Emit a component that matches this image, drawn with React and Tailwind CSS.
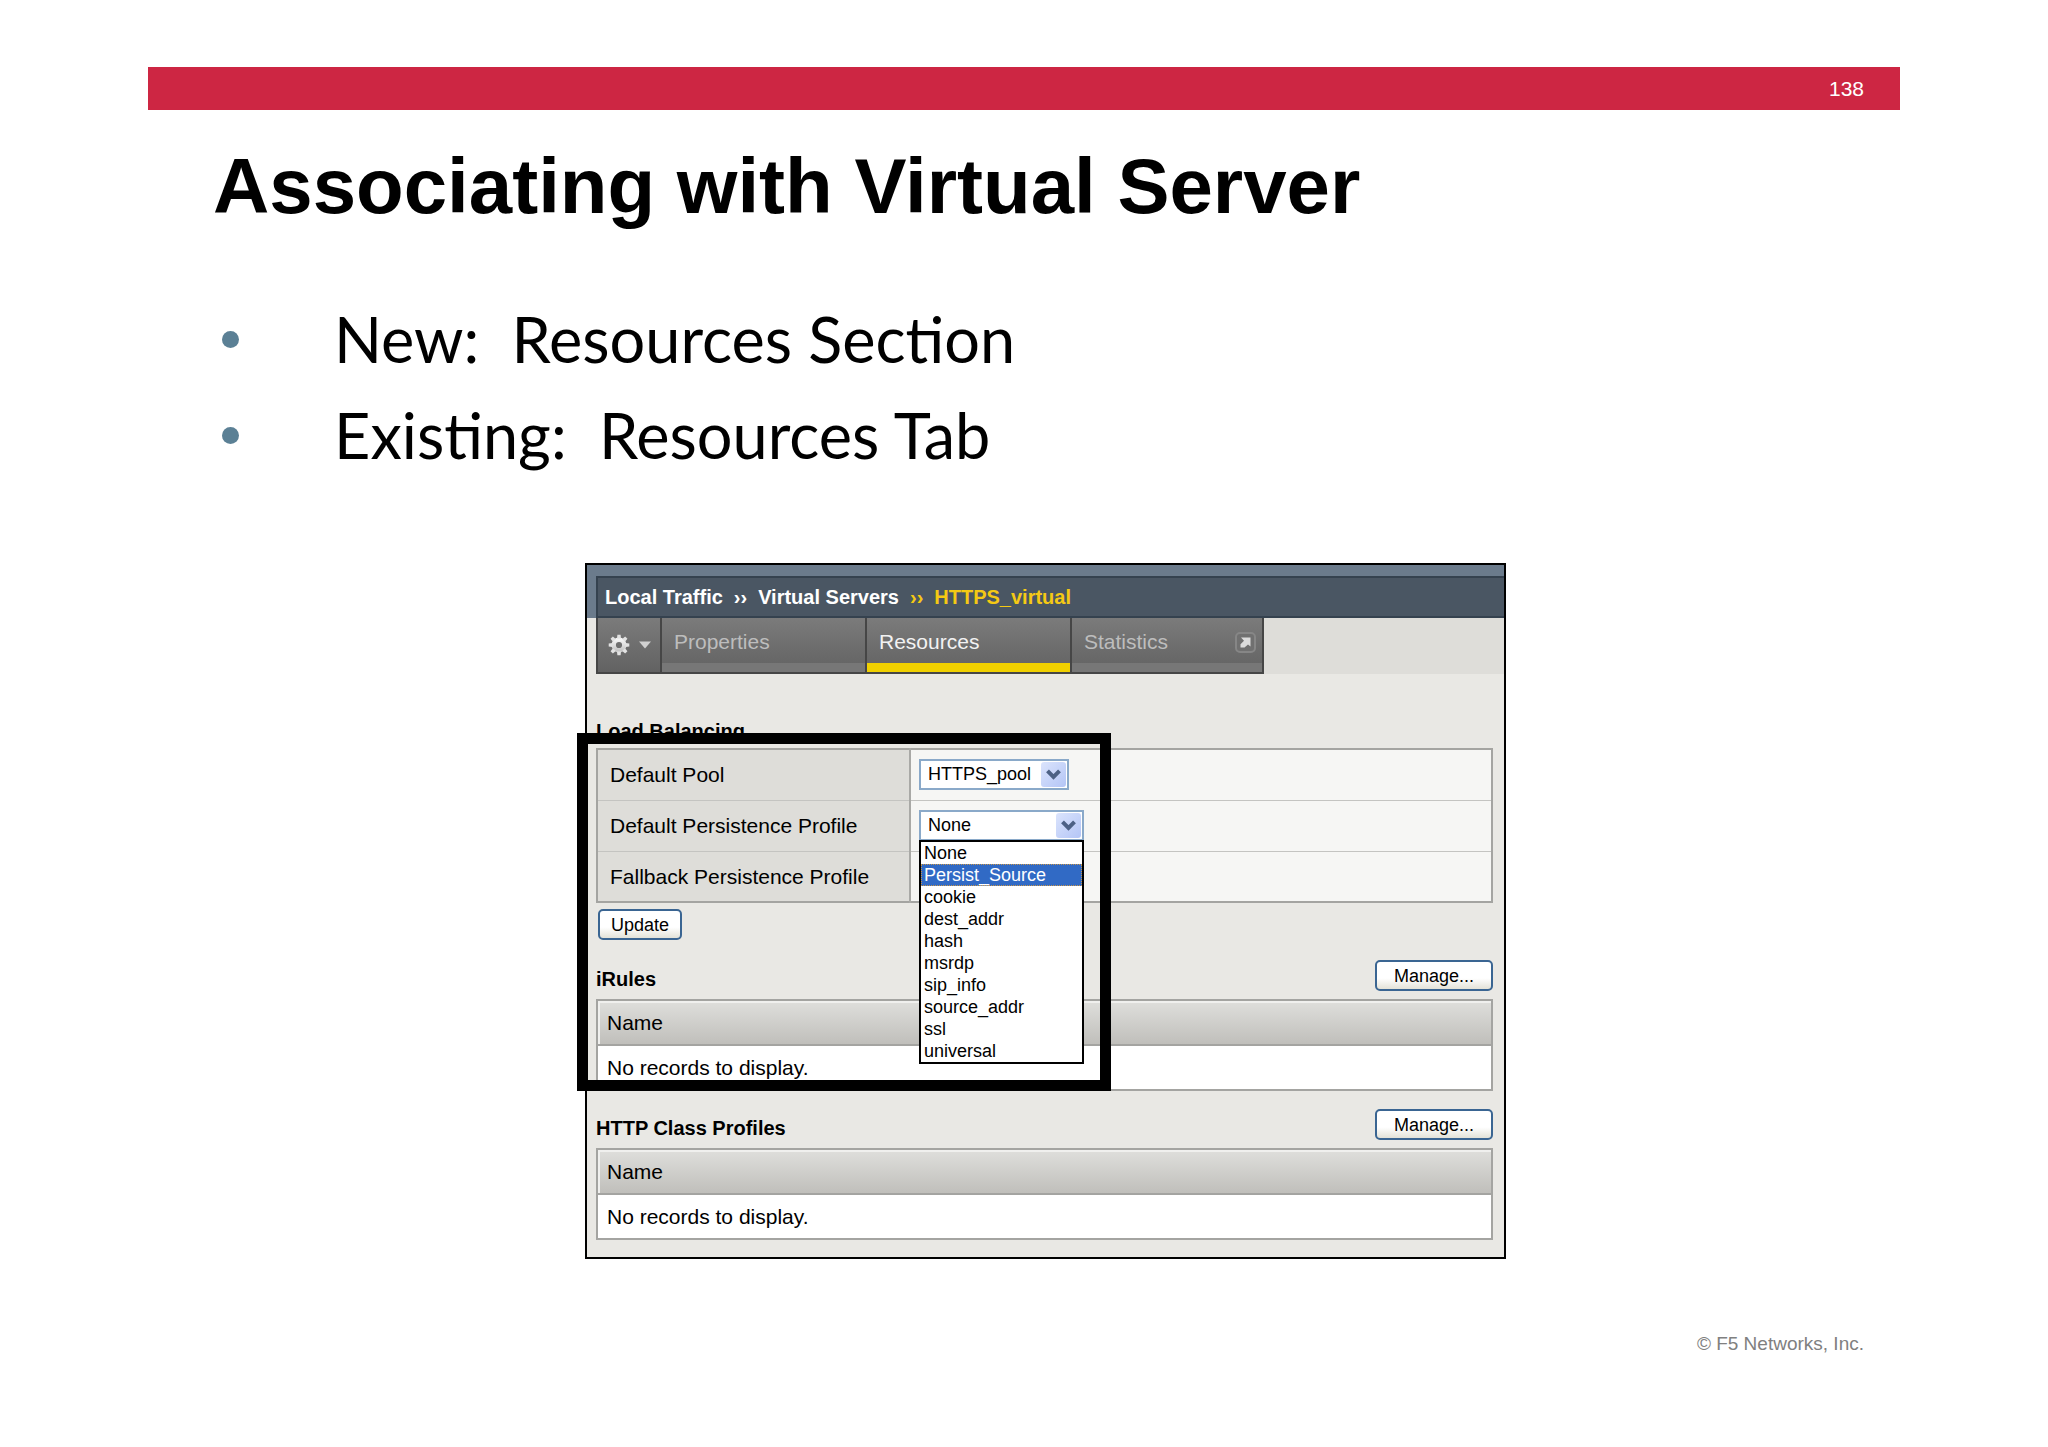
import React from "react";

const persistenceProfiles = [
  "None",
  "Persist_Source",
  "cookie",
  "dest_addr",
  "hash",
  "msrdp",
  "sip_info",
  "source_addr",
  "ssl",
  "universal",
];

function GearIcon() {
  return (
    <svg width="22" height="22" viewBox="-11 -11 22 22">
      <defs>
        <linearGradient id="gear" x1="0" y1="0" x2="0" y2="1">
          <stop offset="0" stopColor="#f4f4f4" />
          <stop offset="1" stopColor="#c6c6c6" />
        </linearGradient>
      </defs>
      <circle r="5.3" fill="none" stroke="url(#gear)" strokeWidth="4.4" />
      {[0, 45, 90, 135, 180, 225, 270, 315].map((angle) => (
        <path key={angle} d="M-2 -6.5L-1.6 -10.3H1.6L2 -6.5Z" fill="#e2e2e2" transform={`rotate(${angle})`} />
      ))}
    </svg>
  );
}

function PopoutIcon() {
  return (
    <svg width="21" height="21" viewBox="0 0 21 21">
      <rect x="1" y="1" width="19" height="19" rx="4" fill="#707070" stroke="#868686" strokeWidth="2" />
      <path d="M6 5.5H15.5V14.5L13 12.4L9.5 15.5H5.5V12.3L9 8.7Z" fill="#dcdcdc" />
    </svg>
  );
}

function Chevron() {
  return (
    <span className="pointer-events-none absolute right-[3px] top-[3px] flex h-[25px] w-[25px] items-center justify-center rounded-[3px] bg-linear-to-br from-[#dbe4fc] to-[#b4c5f6]">
      <svg width="15" height="11" viewBox="0 0 15 11">
        <path d="M1.5 1.8L7.5 7.8L13.5 1.8" fill="none" stroke="#4d6185" strokeWidth="4" />
      </svg>
    </span>
  );
}

function SelectBox({ id, value, className, children }) {
  return (
    <div className={`relative ${className}`}>
      <select
        id={id}
        defaultValue={value}
        className="block h-[31px] w-full appearance-none border-2 border-[#8aa9c9] bg-white pl-[7px] text-lg leading-[27px] text-black outline-none"
      >
        <option>{value}</option>
      </select>
      <Chevron />
      {children}
    </div>
  );
}

function XpButton({ children, className }) {
  return (
    <button
      type="button"
      className={`h-[31px] rounded-[5px] border-2 border-[#3a6592] bg-linear-to-b from-white from-60% to-[#e3e2d8] text-lg leading-[26px] text-black ${className}`}
    >
      {children}
    </button>
  );
}

function SettingRow({ id, label, children }) {
  return (
    <tr className="h-[51px] border-b border-[#c4c4c1] last:border-b-0">
      <th className="w-[313px] border-r-2 border-[#a9a9a6] bg-[#deddd9] pl-3 text-left font-normal">
        <label htmlFor={id}>{label}</label>
      </th>
      <td className="bg-[#f6f6f4] pl-2">{children}</td>
    </tr>
  );
}

function RecordsSection({ title }) {
  return (
    <section>
      <div className="flex items-end justify-between">
        <h2 className="text-xl leading-6 font-bold">{title}</h2>
        <XpButton className="w-[118px]">Manage...</XpButton>
      </div>
      <table className="mt-2 w-full border-collapse border-2 border-[#a4a4a1] bg-white text-left text-[21px]">
        <thead>
          <tr className="h-[45px] border-b-2 border-[#a4a4a1]">
            <th className="bg-linear-to-b from-[#dfdfdc] to-[#c0bfbb] pl-[9px] font-normal shadow-[inset_2px_2px_0_#f0f0ee]">
              Name
            </th>
          </tr>
        </thead>
        <tbody>
          <tr className="h-[45px]">
            <td className="pl-[9px]">No records to display.</td>
          </tr>
        </tbody>
      </table>
    </section>
  );
}

function Tab({ label, active, className, children }) {
  return (
    <a
      href="#"
      className={`flex justify-between border-r-2 border-[#464646] bg-linear-to-b from-[#7b7b7b] to-[#626262] px-3 pt-[9px] text-[21px] leading-[30px] ${
        active ? "text-[#f2f2f2] shadow-[inset_0_-9px_0_#f0d000]" : "text-[#bdbdbd] shadow-[inset_0_-9px_0_#777]"
      } ${className}`}
    >
      {label}
      {children}
    </a>
  );
}

function VirtualServerPanel() {
  return (
    <div className="relative border-2 border-black bg-[#e9e8e4] pb-[17px] text-black">
      <div className="bg-[#6b7b8c] pl-[9px] pt-[11px]">
        <nav className="flex h-[42px] items-center gap-[11px] border-2 border-r-0 border-[#35424f] bg-[#4a5663] pl-[7px] text-xl font-bold text-white">
          <a href="#">Local Traffic</a>
          <span>››</span>
          <a href="#">Virtual Servers</a>
          <span className="text-[#f5c914]">››</span>
          <span className="text-[#f5c914]">HTTPS_virtual</span>
        </nav>
      </div>

      <div className="ml-[9px] flex h-[56px] bg-[#deddd9]">
        <div className="flex border-b-2 border-l-2 border-[#464646]">
          <button
            type="button"
            aria-label="Options"
            className="flex w-[64px] items-center gap-[9px] border-r-2 border-[#464646] bg-linear-to-b from-[#7b7b7b] to-[#626262] pl-[10px]"
          >
            <GearIcon />
            <svg width="12" height="8" viewBox="0 0 12 8">
              <path d="M0 0.5H12L6 7.5Z" fill="#d0d0d0" />
            </svg>
          </button>
          <Tab label="Properties" className="w-[205px]" />
          <Tab label="Resources" active className="w-[205px]" />
          <Tab label="Statistics" className="w-[192px] pr-1.5">
            <span className="mt-[5px]">
              <PopoutIcon />
            </span>
          </Tab>
        </div>
      </div>

      <div className="pt-[42px] pr-[11px] pl-[9px]">
        <h2 className="mb-0.5 text-xl leading-[30px] font-bold">Load Balancing</h2>
        <table className="w-full border-collapse border-2 border-[#a4a4a1] text-[21px]">
          <tbody>
            <SettingRow id="default-pool" label="Default Pool">
              <SelectBox id="default-pool" value="HTTPS_pool" className="w-[150px]" />
            </SettingRow>
            <SettingRow id="default-persistence" label="Default Persistence Profile">
              <SelectBox id="default-persistence" value="None" className="w-[165px]">
                <ul
                  role="listbox"
                  aria-label="Default Persistence Profile"
                  className="absolute left-0 top-[30px] z-10 w-full border-2 border-black bg-white text-lg leading-[22px]"
                >
                  {persistenceProfiles.map((name) => (
                    <li
                      key={name}
                      role="option"
                      aria-selected={name === "Persist_Source"}
                      className={
                        name === "Persist_Source"
                          ? "bg-[#316ac5] pl-[3px] text-white outline-1 -outline-offset-1 outline-dotted outline-[#c9964a]"
                          : "pl-[3px]"
                      }
                    >
                      {name}
                    </li>
                  ))}
                </ul>
              </SelectBox>
            </SettingRow>
            <SettingRow id="fallback-persistence" label="Fallback Persistence Profile">
              <SelectBox id="fallback-persistence" value="None" className="w-[150px]" />
            </SettingRow>
          </tbody>
        </table>
        <div className="pt-1.5 pb-5 pl-0.5">
          <XpButton className="block w-[84px]">Update</XpButton>
        </div>

        <div className="flex flex-col gap-[18px]">
          <RecordsSection title="iRules" />
          <RecordsSection title="HTTP Class Profiles" />
        </div>
      </div>

      {/* highlight frame around the persistence settings */}
      <div className="pointer-events-none absolute -left-[10px] top-[168px] z-20 h-[358px] w-[534px] border-[11px] border-black" />
    </div>
  );
}

export default function App() {
  return (
    <div className="min-h-screen bg-white pt-[67px] font-['Liberation_Sans',Arial,sans-serif]">
      <header className="mx-[148px] flex h-[43px] items-center justify-end bg-[#cd2643] pr-9 text-[21px] text-white">
        138
      </header>

      <main>
        <h1 className="pt-[31px] pl-[213px] text-[78px] leading-[90px] font-bold text-black">
          Associating with Virtual Server
        </h1>
        <ul className="pt-[60px] pl-[222px] font-[Lato,Calibri,sans-serif] text-[63px] leading-[96px] text-black">
          <li className="flex items-center gap-[95px]">
            <span className="size-[17px] rounded-full bg-[#5b8095]" />
            <span className="whitespace-pre">New:  Resources Section</span>
          </li>
          <li className="flex items-center gap-[95px]">
            <span className="size-[17px] rounded-full bg-[#5b8095]" />
            <span className="whitespace-pre">Existing:  Resources Tab</span>
          </li>
        </ul>
        <div className="pt-[80px] pr-[542px] pl-[585px]">
          <VirtualServerPanel />
        </div>
      </main>

      <footer className="pt-[71px] pr-[184px] text-right text-[19px] text-[#808080]">© F5 Networks, Inc.</footer>
    </div>
  );
}
